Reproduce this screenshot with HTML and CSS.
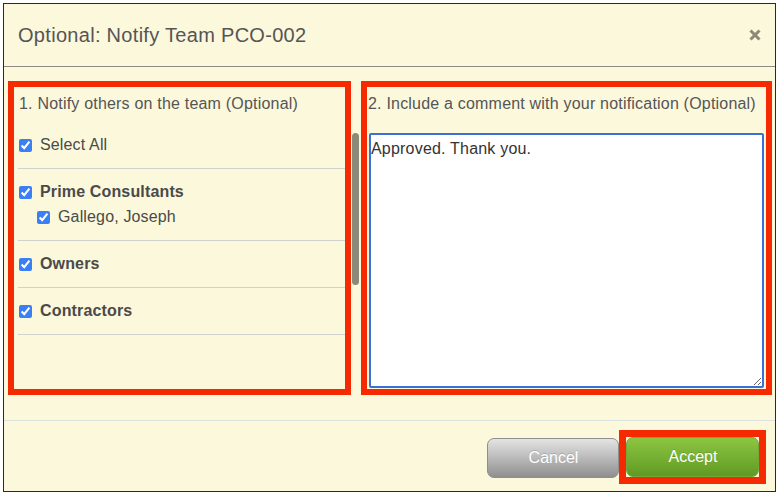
FILE: index.html
```html
<!DOCTYPE html>
<html>
<head>
<meta charset="utf-8">
<link rel="stylesheet" href="styles.css">
</head>
<body>
<div class="dialog">
  <div class="header">
    <div class="title">Optional: Notify Team PCO-002</div>
    <svg class="close" width="14" height="12" viewBox="0 0 14 12"><path d="M2.5 1.5 L11.5 10.5 M11.5 1.5 L2.5 10.5" stroke="#8a8877" stroke-width="3" stroke-linecap="butt"/></svg>
  </div>
  <div class="content">
    <div class="box box-left">
      <div class="section-title">1. Notify others on the team (Optional)</div>
      <div class="list">
        <div class="group">
          <label class="row"><input type="checkbox" checked><span>Select All</span></label>
        </div>
        <div class="group">
          <label class="row bold"><input type="checkbox" checked><span>Prime Consultants</span></label>
          <label class="row sub"><input type="checkbox" checked><span>Gallego, Joseph</span></label>
        </div>
        <div class="group">
          <label class="row bold"><input type="checkbox" checked><span>Owners</span></label>
        </div>
        <div class="group">
          <label class="row bold"><input type="checkbox" checked><span>Contractors</span></label>
        </div>
      </div>
    </div>
    <div class="track"><div class="thumb"></div></div>
    <div class="box box-right">
      <div class="section-title">2. Include a comment with your notification (Optional)</div>
      <textarea class="comment">Approved. Thank you.</textarea>
    </div>
  </div>
  <div class="footer">
    <button class="btn cancel">Cancel</button>
    <div class="accept-wrap"><button class="btn accept">Accept</button></div>
  </div>
</div>
</body>
</html>
```

FILE: styles.css
```css
* { box-sizing: border-box; }
html, body { margin: 0; padding: 0; background: #ffffff; }
body { font-family: "Liberation Sans", Arial, sans-serif; }

.dialog {
  margin: 3px;
  width: 773px;
  height: 489px;
  border: 1px solid #2a2a2a;
  background: #fcf8dc;
  display: flex;
  flex-direction: column;
}

.header {
  height: 63px;
  border-bottom: 1px solid #8c8c84;
  display: flex;
  align-items: center;
  justify-content: space-between;
  padding: 0 13px 0 14px;
}
.title {
  font-size: 20px;
  letter-spacing: 0.3px;
  color: #555555;
  margin-top: 1px;
}
.close { display: block; margin-top: -1px; }

.content {
  display: flex;
  padding: 14px 3px 0 4px;
  height: 353px;
}

.box {
  border: 6px solid #f52a00;
  height: 314px;
}
.box-left { width: 343px; padding: 7px 0 0 5px; }
.box-right { width: 411px; margin-left: 2px; padding: 7px 0 0 1px; }

.track { width: 7px; margin-left: 1px; }
.thumb {
  margin-top: 52px;
  height: 152px;
  width: 7px;
  border-radius: 4px;
  background: #8b8a78;
}

.section-title {
  font-size: 16px;
  line-height: 20px;
  letter-spacing: 0.2px;
  color: #555555;
}
.box-left .section-title { margin-bottom: 9px; }

.list { margin-left: -1px; width: 327px; }
.group {
  padding: 12px 0 13px 1px;
  border-bottom: 1px solid #d2d2cc;
  display: flex;
  flex-direction: column;
  gap: 5px;
}
.group + .group { padding-top: 13px; }
.row {
  display: flex;
  align-items: center;
  height: 20px;
  font-size: 16px;
  letter-spacing: 0.15px;
  color: #4a4a4a;
}
.row.bold { font-weight: bold; }
.row.sub { padding-left: 18px; }
.row input {
  margin: 0 8px 0 0;
  width: 13px;
  height: 13px;
  accent-color: #3a7ff6;
}

.comment {
  display: block;
  margin: 19px 0 0 1px;
  width: 395px;
  height: 255px;
  border: 2px solid #3c6fd8;
  border-radius: 2px;
  background: #ffffff;
  padding: 5px 0;
  font-family: "Liberation Sans", Arial, sans-serif;
  font-size: 16px;
  line-height: 18px;
  letter-spacing: 0.2px;
  color: #333333;
  outline: none;
  resize: both;
}

.footer {
  flex: 1;
  border-top: 1px solid #dbe2e0;
  display: flex;
  justify-content: flex-end;
  align-items: flex-start;
  padding: 9px 9px 0 0;
}

.btn {
  width: 133px;
  height: 40px;
  border-radius: 7px;
  font-family: "Liberation Sans", Arial, sans-serif;
  font-size: 16px;
  color: #ffffff;
  text-shadow: 0 -1px 0 rgba(0,0,0,0.15);
  padding: 0 0 0 1px;
}
.cancel {
  margin-top: 8px;
  width: 132px;
  border: 1px solid #8e8e8e;
  background: linear-gradient(#e4e4e4, #8f8f8f);
}
.accept-wrap {
  border: 7px solid #f52a00;
}
.accept {
  display: block;
  border: 1px solid #72a83a;
  background: linear-gradient(#8dc641, #609a24);
}
```
